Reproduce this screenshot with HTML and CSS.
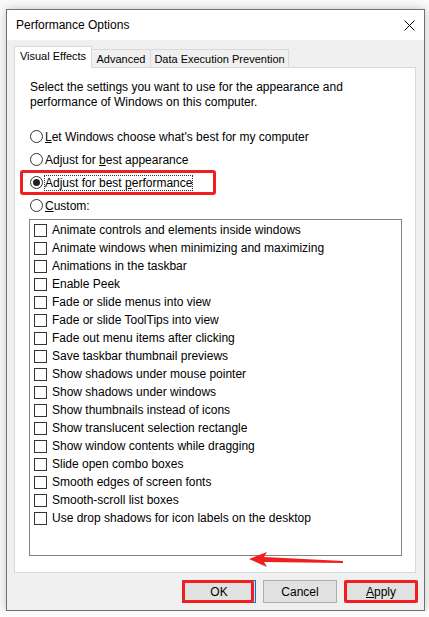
FILE: index.html
```html
<!DOCTYPE html>
<html lang="en">
<head>
<meta charset="UTF-8">
<meta name="viewport" content="width=device-width, initial-scale=1.0">
<title>Performance Options</title>
<link rel="stylesheet" href="styles.css">
</head>
<body>
  <div class="window">
    <div class="titlebar">
      <span class="title">Performance Options</span>
      <svg class="close" width="11" height="11" viewBox="0 0 11 11">
        <path d="M0.5 0.5 L10.5 10.5 M10.5 0.5 L0.5 10.5" stroke="#000" stroke-width="1" fill="none"/>
      </svg>
    </div>

    <div class="content">
      <div class="tabs">
        <div class="tab active tab-visual">Visual Effects</div>
        <div class="tab tab-advanced">Advanced</div>
        <div class="tab tab-dep">Data Execution Prevention</div>
      </div>

      <div class="panel">
        <p class="intro">Select the settings you want to use for the appearance and<br>performance of Windows on this computer.</p>

        <div class="radios">
          <div class="radio"><span class="circle"></span><span><u>L</u>et Windows choose what's best for my computer</span></div>
          <div class="radio"><span class="circle"></span><span>Adjust for <u>b</u>est appearance</span></div>
          <div class="radio checked marked"><span class="circle"></span><span class="focus">Adjust for best <u>p</u>erformance</span></div>
          <div class="radio"><span class="circle"></span><span><u>C</u>ustom:</span></div>
        </div>

        <div class="listbox">
          <div class="check"><span class="box"></span>Animate controls and elements inside windows</div>
          <div class="check"><span class="box"></span>Animate windows when minimizing and maximizing</div>
          <div class="check"><span class="box"></span>Animations in the taskbar</div>
          <div class="check"><span class="box"></span>Enable Peek</div>
          <div class="check"><span class="box"></span>Fade or slide menus into view</div>
          <div class="check"><span class="box"></span>Fade or slide ToolTips into view</div>
          <div class="check"><span class="box"></span>Fade out menu items after clicking</div>
          <div class="check"><span class="box"></span>Save taskbar thumbnail previews</div>
          <div class="check"><span class="box"></span>Show shadows under mouse pointer</div>
          <div class="check"><span class="box"></span>Show shadows under windows</div>
          <div class="check"><span class="box"></span>Show thumbnails instead of icons</div>
          <div class="check"><span class="box"></span>Show translucent selection rectangle</div>
          <div class="check"><span class="box"></span>Show window contents while dragging</div>
          <div class="check"><span class="box"></span>Slide open combo boxes</div>
          <div class="check"><span class="box"></span>Smooth edges of screen fonts</div>
          <div class="check"><span class="box"></span>Smooth-scroll list boxes</div>
          <div class="check"><span class="box"></span>Use drop shadows for icon labels on the desktop</div>
        </div>
      </div>

      <div class="buttons">
        <button class="btn default marked">OK</button>
        <button class="btn">Cancel</button>
        <button class="btn marked"><u>A</u>pply</button>
      </div>
    </div>

    <!-- annotation arrow pointing at the list box -->
    <svg class="arrow" width="96" height="18" viewBox="0 0 96 18">
      <polygon points="1,8 19,1 16,6 95,10 95,12 16,11 19,16" fill="#f01e1e"/>
    </svg>
  </div>
</body>
</html>
```

FILE: styles.css
```css
body {
  margin: 0;
  background-color: #fbfbfb;
  font-family: "Liberation Sans", Arial, sans-serif;
  font-size: 12px;
  color: #000;
}
.window {
  position: relative;
  width: 417px;
  height: 600px;
  margin: 9px 0 0 6px;
  border: 1px solid #707070;
  background-color: #f0f0f0;
  box-shadow: 0 0 10px rgba(0, 0, 0, 0.22);
}
.titlebar {
  height: 30px;
  background-color: #fff;
  display: flex;
  align-items: center;
  justify-content: space-between;
  padding: 0 9px 0 9px;
}
.title {
  font-size: 12px;
}
.close {
  display: block;
}
.content {
  padding: 7px 8px 0 7px;
}
.tabs {
  display: flex;
  align-items: flex-end;
  height: 20px;
}
.tab {
  height: 17px;
  line-height: 18px;
  font-size: 11px;
  text-align: center;
  box-sizing: content-box;
  border: 1px solid #d9d9d9;
  border-bottom: none;
  border-left: none;
  background-color: #f0f0f0;
  white-space: nowrap;
}
.tab.active {
  position: relative;
  height: 21px;
  line-height: 19px;
  margin-bottom: -1px;
  background-color: #fff;
  border-left: 1px solid #d9d9d9;
  z-index: 1;
}
.tab-visual {
  width: 76px;
}
.tab-advanced {
  width: 58px;
}
.tab-dep {
  width: 137px;
}
.panel {
  height: 504px;
  background-color: #fff;
  border: 1px solid #d9d9d9;
  padding: 0 15px;
}
.intro {
  margin: 12px 0 0 0;
  line-height: 15px;
}
.radios {
  margin-top: 15px;
}
.radio {
  position: relative;
  display: flex;
  align-items: center;
  height: 23px;
}
.radio .circle {
  width: 11px;
  height: 11px;
  border: 1px solid #333;
  border-radius: 50%;
  margin-right: 2px;
  display: flex;
  align-items: center;
  justify-content: center;
  background-color: #fff;
}
.radio.checked .circle::after {
  content: "";
  width: 7px;
  height: 7px;
  border-radius: 50%;
  background-color: #222;
}
.radio .focus {
  outline: 1px dotted #333;
  outline-offset: 0;
}
.radio.marked::after {
  content: "";
  position: absolute;
  left: -10px;
  top: -1px;
  width: 196px;
  height: 25px;
  box-sizing: border-box;
  border: 3px solid #f01e1e;
  border-radius: 3px;
}
.listbox {
  width: 367px;
  height: 334px;
  margin: 2px 0 0 -1px;
  border: 1px solid #828282;
  padding: 1px 0 0 4px;
}
.check {
  display: flex;
  align-items: center;
  height: 18px;
  white-space: nowrap;
}
.check .box {
  width: 11px;
  height: 11px;
  border: 1px solid #333;
  margin-right: 5px;
  flex-shrink: 0;
}
.buttons {
  display: flex;
  justify-content: flex-end;
  gap: 7px;
  margin: 7px -2px 0 0;
}
.btn {
  position: relative;
  width: 74px;
  height: 23px;
  font-family: "Liberation Sans", Arial, sans-serif;
  font-size: 12px;
  color: #000;
  background-color: #e1e1e1;
  border: 1px solid #adadad;
  padding: 0;
}
.btn.default {
  border-color: #0078d7;
}
.btn.marked::after {
  content: "";
  position: absolute;
  left: -1px;
  top: -1px;
  right: -1px;
  bottom: -1px;
  border: 3px solid #f01e1e;
  border-radius: 3px;
}
.btn.default.marked::after {
  right: 1px;
}
.arrow {
  position: absolute;
  left: 241px;
  top: 541px;
}
```
